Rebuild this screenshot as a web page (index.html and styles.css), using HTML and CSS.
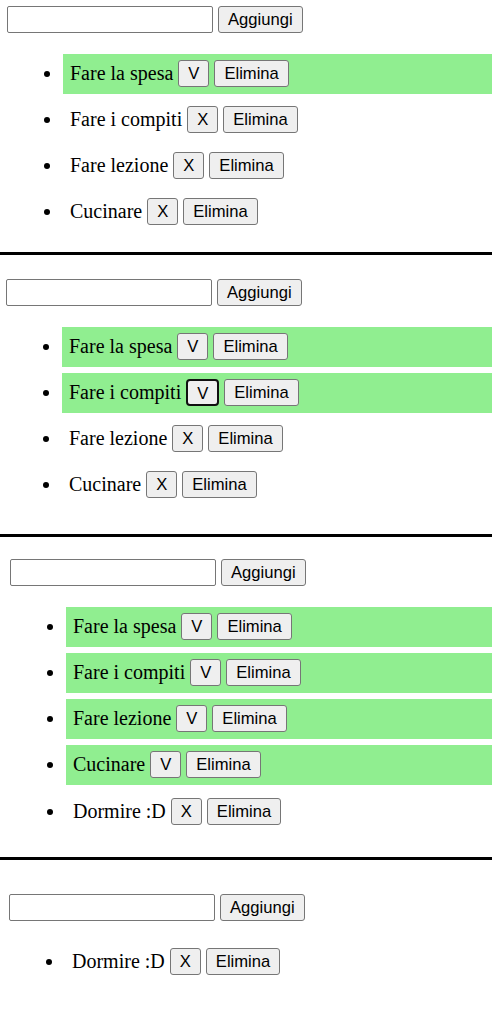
FILE: index.html
```html
<!DOCTYPE html>
<html lang="it">
<head>
<meta charset="utf-8">
<title>Todo</title>
<link rel="stylesheet" href="styles.css">
</head>
<body>
<section class="panel p1">
  <div class="add-row"><input class="field" type="text"><button class="btn">Aggiungi</button></div>
  <ul class="list">
    <li class="item done">Fare la spesa <button class="btn">V</button> <button class="btn">Elimina</button></li>
    <li class="item">Fare i compiti <button class="btn">X</button> <button class="btn">Elimina</button></li>
    <li class="item">Fare lezione <button class="btn">X</button> <button class="btn">Elimina</button></li>
    <li class="item">Cucinare <button class="btn">X</button> <button class="btn">Elimina</button></li>
  </ul>
</section>
<div class="sep"></div>
<section class="panel p2">
  <div class="add-row"><input class="field" type="text"><button class="btn">Aggiungi</button></div>
  <ul class="list">
    <li class="item done">Fare la spesa <button class="btn">V</button> <button class="btn">Elimina</button></li>
    <li class="item done">Fare i compiti <button class="btn focused">V</button> <button class="btn">Elimina</button></li>
    <li class="item">Fare lezione <button class="btn">X</button> <button class="btn">Elimina</button></li>
    <li class="item">Cucinare <button class="btn">X</button> <button class="btn">Elimina</button></li>
  </ul>
</section>
<div class="sep"></div>
<section class="panel p3">
  <div class="add-row"><input class="field" type="text"><button class="btn">Aggiungi</button></div>
  <ul class="list">
    <li class="item done">Fare la spesa <button class="btn">V</button> <button class="btn">Elimina</button></li>
    <li class="item done">Fare i compiti <button class="btn">V</button> <button class="btn">Elimina</button></li>
    <li class="item done">Fare lezione <button class="btn">V</button> <button class="btn">Elimina</button></li>
    <li class="item done">Cucinare <button class="btn">V</button> <button class="btn">Elimina</button></li>
    <li class="item last">Dormire :D <button class="btn">X</button> <button class="btn">Elimina</button></li>
  </ul>
</section>
<div class="sep"></div>
<section class="panel p4">
  <div class="add-row"><input class="field" type="text"><button class="btn">Aggiungi</button></div>
  <ul class="list">
    <li class="item">Dormire :D <button class="btn">X</button> <button class="btn">Elimina</button></li>
  </ul>
</section>
</body>
</html>
```
FILE: styles.css
```css
html, body {
  margin: 0;
  padding: 0;
  background: #ffffff;
}
body {
  width: 492px;
  font-family: "Liberation Serif", "Times New Roman", serif;
  font-size: 20px;
  color: #000000;
}
.panel {
  display: flow-root;
}
.p1 { padding: 6px 0 0 7px; }
.p2 { padding: 24px 0 0 6px; }
.p3 { padding: 22px 0 0 10px; }
.p4 { padding: 34px 0 0 9px; height: 126px; }

.p1 .list { margin: 21px 0 20px; }
.p2 .list { margin: 21px 0 29px; }
.p3 .list { margin: 21px 0 25px; }
.p4 .list { margin: 21px 0 0; }

.sep {
  height: 3px;
  background: #000000;
}
.add-row {
  display: flex;
  align-items: center;
  gap: 5px;
  height: 27px;
}
.field {
  box-sizing: border-box;
  width: 206px;
  height: 27px;
  margin: 0;
  border: 1px solid #767676;
  border-radius: 2px;
  background: #ffffff;
  padding: 1px 3px;
  font-size: 16.5px;
}
.btn {
  box-sizing: border-box;
  height: 27px;
  margin: 0;
  padding: 0 9px;
  border: 1px solid #767676;
  border-radius: 3px;
  background: #efefef;
  color: #000000;
  font-family: "Liberation Sans", Arial, sans-serif;
  font-size: 16.6px;
  line-height: 25px;
}
.item .btn {
  vertical-align: top;
}
.btn.focused {
  border: 2px solid #101010;
  border-radius: 4px;
}
.list {
  padding: 0 0 0 56px;
  list-style: disc;
}
.item {
  box-sizing: border-box;
  height: 40px;
  margin: 6px 0;
  padding: 6px 7px;
  line-height: 26px;
}
.item.last {
  margin-top: 7px;
}
.item.done {
  background: #90ee90;
}
```
